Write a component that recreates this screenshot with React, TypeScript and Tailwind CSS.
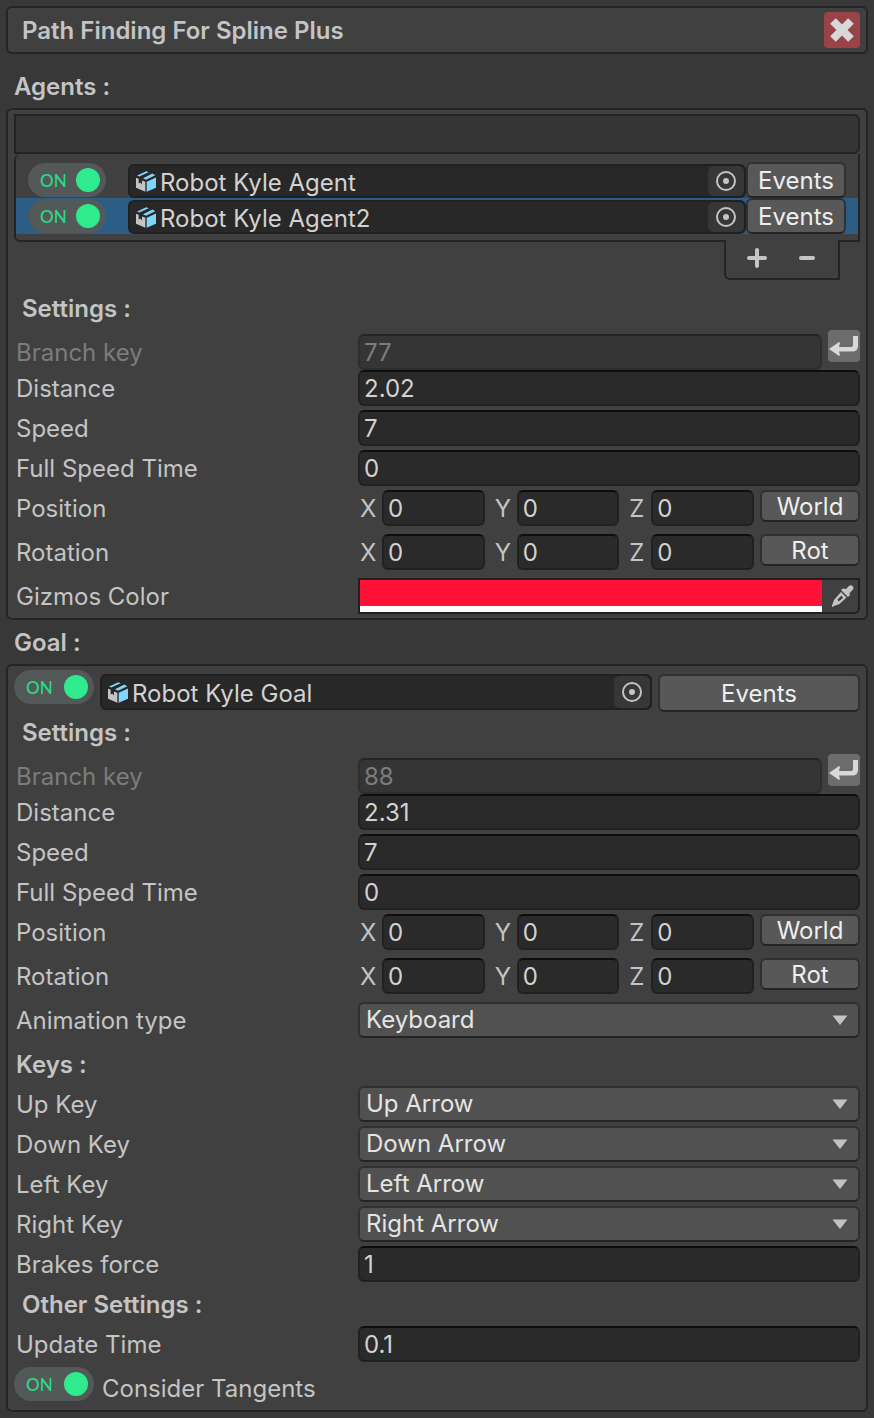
import { useState } from "react";
import type { ReactNode } from "react";

const fieldBorder = "border-2 border-[#212121] border-t-[#0d0d0d] rounded-md";
const buttonLook =
  "rounded-md border-2 border-[#303030] border-b-[#242424] bg-[#585858] pt-[2px] text-[#eeeeee] hover:bg-[#676767]";

function Toggle({ label, narrow }: { label: string; narrow?: boolean }) {
  const [on, setOn] = useState(true);
  return (
    <label
      className={`relative flex h-[34px] shrink-0 cursor-pointer items-center justify-between rounded-full bg-[#535858] pr-[6px] pl-[12px] ${
        narrow ? "w-[78px]" : "w-[80px]"
      }`}
    >
      <input
        type="checkbox"
        role="switch"
        aria-label={label}
        checked={on}
        onChange={() => setOn(!on)}
        className="absolute inset-0 cursor-pointer opacity-0"
      />
      <span className="font-[Lato,sans-serif] text-[17px] leading-none font-medium text-[#2fd886]">{on ? "ON" : "OFF"}</span>
      <span className={`size-6 rounded-full ${on ? "bg-[#30eb8d]" : "bg-[#8a8a8a]"}`} />
    </label>
  );
}

function CubeIcon() {
  return (
    <svg viewBox="0 0 60 62" className="h-[21px] w-5 shrink-0" aria-hidden="true">
      <path d="M0 20 L8 23 V37 L13 34 L18 40 V28 L28 32 V62 L0 50 Z" fill="#c4c4c4" />
      <path d="M32 32 L60 19 V50 L32 62 Z" fill="#81d4fa" />
      <path d="M3 13 L31 0 L38 3 L10 16 Z" fill="#81d4fa" />
      <path d="M21 21 L49 7 L58 12 L30 26 Z" fill="#81d4fa" />
    </svg>
  );
}

function ObjectField({ label, value, tall }: { label: string; value: string; tall?: boolean }) {
  return (
    <div
      className={`flex min-w-0 flex-1 items-center rounded-md border-2 border-[#202020] bg-[#282828] pl-[6px] ${
        tall ? "h-9" : "h-[34px]"
      }`}
    >
      <CubeIcon />
      <input
        aria-label={label}
        defaultValue={value}
        className="ml-1 min-w-0 flex-1 bg-transparent pt-[3px] text-[#d2d2d2] outline-none"
      />
      <button
        type="button"
        aria-label={`Pick ${label}`}
        className="flex w-9 shrink-0 items-center justify-center self-stretch rounded-md bg-[#373737]"
      >
        <svg viewBox="0 0 20 20" className="size-5" aria-hidden="true">
          <circle cx="10" cy="10" r="9" fill="none" stroke="#c4c4c4" strokeWidth="2" />
          <circle cx="10" cy="10" r="3" fill="#c4c4c4" />
        </svg>
      </button>
    </div>
  );
}

function Row({ label, htmlFor, children }: { label: string; htmlFor?: string; children: ReactNode }) {
  return (
    <div className="grid grid-cols-[344px_minmax(0,1fr)] items-center">
      {htmlFor ? (
        <label htmlFor={htmlFor} className="pt-[2px] pl-[2px]">
          {label}
        </label>
      ) : (
        <span className="pt-[2px] pl-[2px]">{label}</span>
      )}
      {children}
    </div>
  );
}

function TextRow({ id, label, value }: { id: string; label: string; value: string }) {
  return (
    <Row label={label} htmlFor={id}>
      <input id={id} defaultValue={value} className={`h-9 w-full bg-[#2a2a2a] pl-1 text-[#d2d2d2] outline-none ${fieldBorder}`} />
    </Row>
  );
}

function BranchRow({ id, value }: { id: string; value: string }) {
  return (
    <div className="grid grid-cols-[344px_minmax(0,1fr)] items-center">
      <label htmlFor={id} className="pt-[2px] pl-[2px] text-[#7c7c7c]">
        Branch key
      </label>
      <div className="flex h-9 gap-[6px]">
        <input
          id={id}
          disabled
          value={value}
          readOnly
          className="h-9 min-w-0 flex-1 rounded-md border-2 border-[#2d2d2d] border-t-[#242424] bg-[#353535] pl-1 text-[#7c7c7c]"
        />
        <button type="button" aria-label="Apply branch key" className="-mt-1 size-8 rounded bg-[#6c6c6c]">
          <svg viewBox="0 0 32 32" className="size-8" aria-hidden="true">
            <path d="M25 6 H30 V16 Q30 21.500 24 21.500 H11 L12 25 L11 26 L1 19 L11 12 L12 13 L11 17 H23 Q25 17 25 15 Z" fill="#d8d8d8" />
          </svg>
        </button>
      </div>
    </div>
  );
}

function VectorRow({ label, action }: { label: string; action: string }) {
  return (
    <Row label={label}>
      <div className="flex gap-[6px]">
        <div className="grid min-w-0 flex-1 grid-cols-3 gap-2">
          {["X", "Y", "Z"].map((axis) => (
            <label key={axis} className="flex items-center">
              <span className="w-6 shrink-0 pt-[2px] pl-[2px]">{axis}</span>
              <input
                aria-label={`${label} ${axis}`}
                defaultValue="0"
                className={`h-9 w-full min-w-0 bg-[#2a2a2a] pl-1 text-[#d2d2d2] outline-none ${fieldBorder}`}
              />
            </label>
          ))}
        </div>
        <button type="button" className={`flex h-8 w-[100px] items-center justify-center ${buttonLook}`}>
          {action}
        </button>
      </div>
    </Row>
  );
}

function SelectRow({ id, label, options }: { id: string; label: string; options: string[] }) {
  return (
    <Row label={label} htmlFor={id}>
      <div className="relative">
        <select
          id={id}
          className="block h-9 w-full appearance-none rounded-md border-2 border-[#303030] border-b-[#242424] bg-[#515151] pr-8 pb-[2px] pl-[6px] text-[#e4e4e4] outline-none"
        >
          {options.map((o) => (
            <option key={o}>{o}</option>
          ))}
        </select>
        <svg
          viewBox="0 0 16 10"
          className="pointer-events-none absolute top-1/2 right-3 h-[10px] w-4 -translate-y-1/2"
          aria-hidden="true"
        >
          <path d="M0.500 0.500 H15.500 L8 10 Z" fill="#c4c4c4" />
        </svg>
      </div>
    </Row>
  );
}

function Heading({ children, className = "" }: { children: ReactNode; className?: string }) {
  return <h2 className={`font-semibold ${className}`}>{children}</h2>;
}

function MotionSettings({ prefix, branch, distance }: { prefix: string; branch: string; distance: string }) {
  return (
    <>
      <BranchRow id={`${prefix}-branch`} value={branch} />
      <div className="flex flex-col gap-1">
        <TextRow id={`${prefix}-distance`} label="Distance" value={distance} />
        <TextRow id={`${prefix}-speed`} label="Speed" value="7" />
        <TextRow id={`${prefix}-time`} label="Full Speed Time" value="0" />
        <VectorRow label="Position" action="World" />
      </div>
      <div className="mt-2">
        <VectorRow label="Rotation" action="Rot" />
      </div>
    </>
  );
}

const keys = ["Up", "Down", "Left", "Right"];
const arrows = keys.map((k) => `${k} Arrow`);

export default function App() {
  const [selected, setSelected] = useState(1);
  const agents = ["Robot Kyle Agent", "Robot Kyle Agent2"];

  return (
    <main className="min-h-screen bg-[#383838] p-[6px] font-[Inter,sans-serif] text-[24px] leading-8 font-[380] text-[#c4c4c4] [font-optical-sizing:none]">
      <header className="flex h-12 items-center justify-between rounded-md border-2 border-[#242424] bg-[#404040] pr-[6px] pl-[14px]">
        <h1 className="pt-[2px] font-semibold">Path Finding For Spline Plus</h1>
        <button type="button" aria-label="Close" className="size-9 rounded bg-[#984346]">
          <svg viewBox="0 0 36 36" className="size-9" aria-hidden="true">
            <path d="M9 9 L27 27 M27 9 L9 27" stroke="#d8d8d8" strokeWidth="8" fill="none" />
          </svg>
        </button>
      </header>

      <Heading className="mt-[17px] pl-2">Agents :</Heading>
      <section className="mt-[5px] rounded-md border-2 border-[#242424] bg-[#404040] px-[6px] py-1">
        <div className="h-10 rounded-r-md border-2 border-[#242424] bg-[#353535]" />
        <div className="rounded-l-md border-x-2 border-b-2 border-[#242424] pt-2 pb-[6px]">
          {agents.map((name, i) => (
            <div
              key={name}
              onClick={() => setSelected(i)}
              className={`flex h-9 items-center pr-3 pl-3 ${selected === i ? "bg-[#2c5d87]" : ""}`}
            >
              <Toggle narrow label={`Enable ${name}`} />
              <div className="ml-[22px] flex min-w-0 flex-1">
                <div className="flex min-w-0 flex-1 pt-[2px]">
                  <ObjectField label={name} value={name} />
                </div>
                <button type="button" className={`flex h-9 w-[100px] items-center justify-center ${buttonLook}`}>
                  Events
                </button>
              </div>
            </div>
          ))}
        </div>
        <div className="-mt-[2px] mr-5 ml-auto flex h-10 w-[116px] items-center justify-center gap-[30px] rounded-bl-md border-2 border-t-0 border-[#242424] bg-[#404040] pb-[2px]">
          <button type="button" aria-label="Add agent">
            <svg viewBox="0 0 20 20" className="size-5" aria-hidden="true">
              <path d="M10 2 V18 M2 10 H18" stroke="#c4c4c4" strokeWidth="4" strokeLinecap="round" />
            </svg>
          </button>
          <button type="button" aria-label="Remove agent">
            <svg viewBox="0 0 20 20" className="size-5" aria-hidden="true">
              <path d="M4 10 H16" stroke="#c4c4c4" strokeWidth="4" strokeLinecap="round" />
            </svg>
          </button>
        </div>

        <Heading className="mt-[13px] mb-[9px] pl-2">Settings :</Heading>
        <MotionSettings prefix="agent" branch="77" distance="2.02" />
        <div className="mt-2">
          <Row label="Gizmos Color">
            <div className="flex h-9 rounded-br-md border-2 border-[#202020]">
              <button type="button" aria-label="Gizmos color value" className="flex flex-1 flex-col bg-[#ff1138]">
                <span className="mt-auto h-[6px] w-full bg-white" />
              </button>
              <button type="button" aria-label="Pick color" className="flex w-9 items-center justify-center pl-[6px]">
                <svg viewBox="0 0 22 22" className="size-[22px]" aria-hidden="true">
                  <path
                    d="M14 4 L17 1 Q19 -0.500 20.500 1 Q22 2.500 21 4.500 L17.500 8 L18 10 L16 12 L9 5 L11 3.500 Z"
                    fill="#c4c4c4"
                  />
                  <path
                    d="M9 7 L14.500 12.500 L7.500 19 L2 21 L0 22 L0 20.500 L2 15 Z M9.500 10.500 L5.500 14.500 L6.500 16.500 L11 13 Z"
                    fill="#c4c4c4"
                    fillRule="evenodd"
                  />
                </svg>
              </button>
            </div>
          </Row>
        </div>
      </section>

      <Heading className="mt-[7px] pl-2">Goal :</Heading>
      <section className="mt-[5px] rounded-md border-2 border-[#242424] bg-[#404040] px-[6px] pt-1 pb-[5px]">
        <div className="flex gap-[6px]">
          <Toggle label="Enable goal" />
          <div className="flex min-w-0 flex-1 gap-[6px] pt-1">
            <ObjectField tall label="Robot Kyle Goal" value="Robot Kyle Goal" />
            <button type="button" className={`flex h-[38px] w-[202px] items-center justify-center ${buttonLook}`}>
              Events
            </button>
          </div>
        </div>
        <Heading className="mt-[5px] mb-[9px] pl-2">Settings :</Heading>
        <MotionSettings prefix="goal" branch="88" distance="2.31" />
        <div className="mt-2">
          <SelectRow id="animation-type" label="Animation type" options={["Keyboard"]} />
        </div>
        <Heading className="mt-[11px] mb-[5px] pl-[2px]">Keys :</Heading>
        <div className="flex flex-col gap-1">
          {keys.map((k, i) => (
            <SelectRow
              key={k}
              id={`key-${k}`}
              label={`${k} Key`}
              options={[arrows[i], ...arrows.filter((_, j) => j !== i)]}
            />
          ))}
          <TextRow id="brakes" label="Brakes force" value="1" />
        </div>
        <Heading className="mt-[7px] mb-[5px] pl-2">Other Settings :</Heading>
        <TextRow id="update-time" label="Update Time" value="0.1" />
        <div className="mt-[5px] flex items-start gap-2">
          <Toggle label="Consider Tangents" />
          <span className="pt-[6px]">Consider Tangents</span>
        </div>
      </section>
    </main>
  );
}
